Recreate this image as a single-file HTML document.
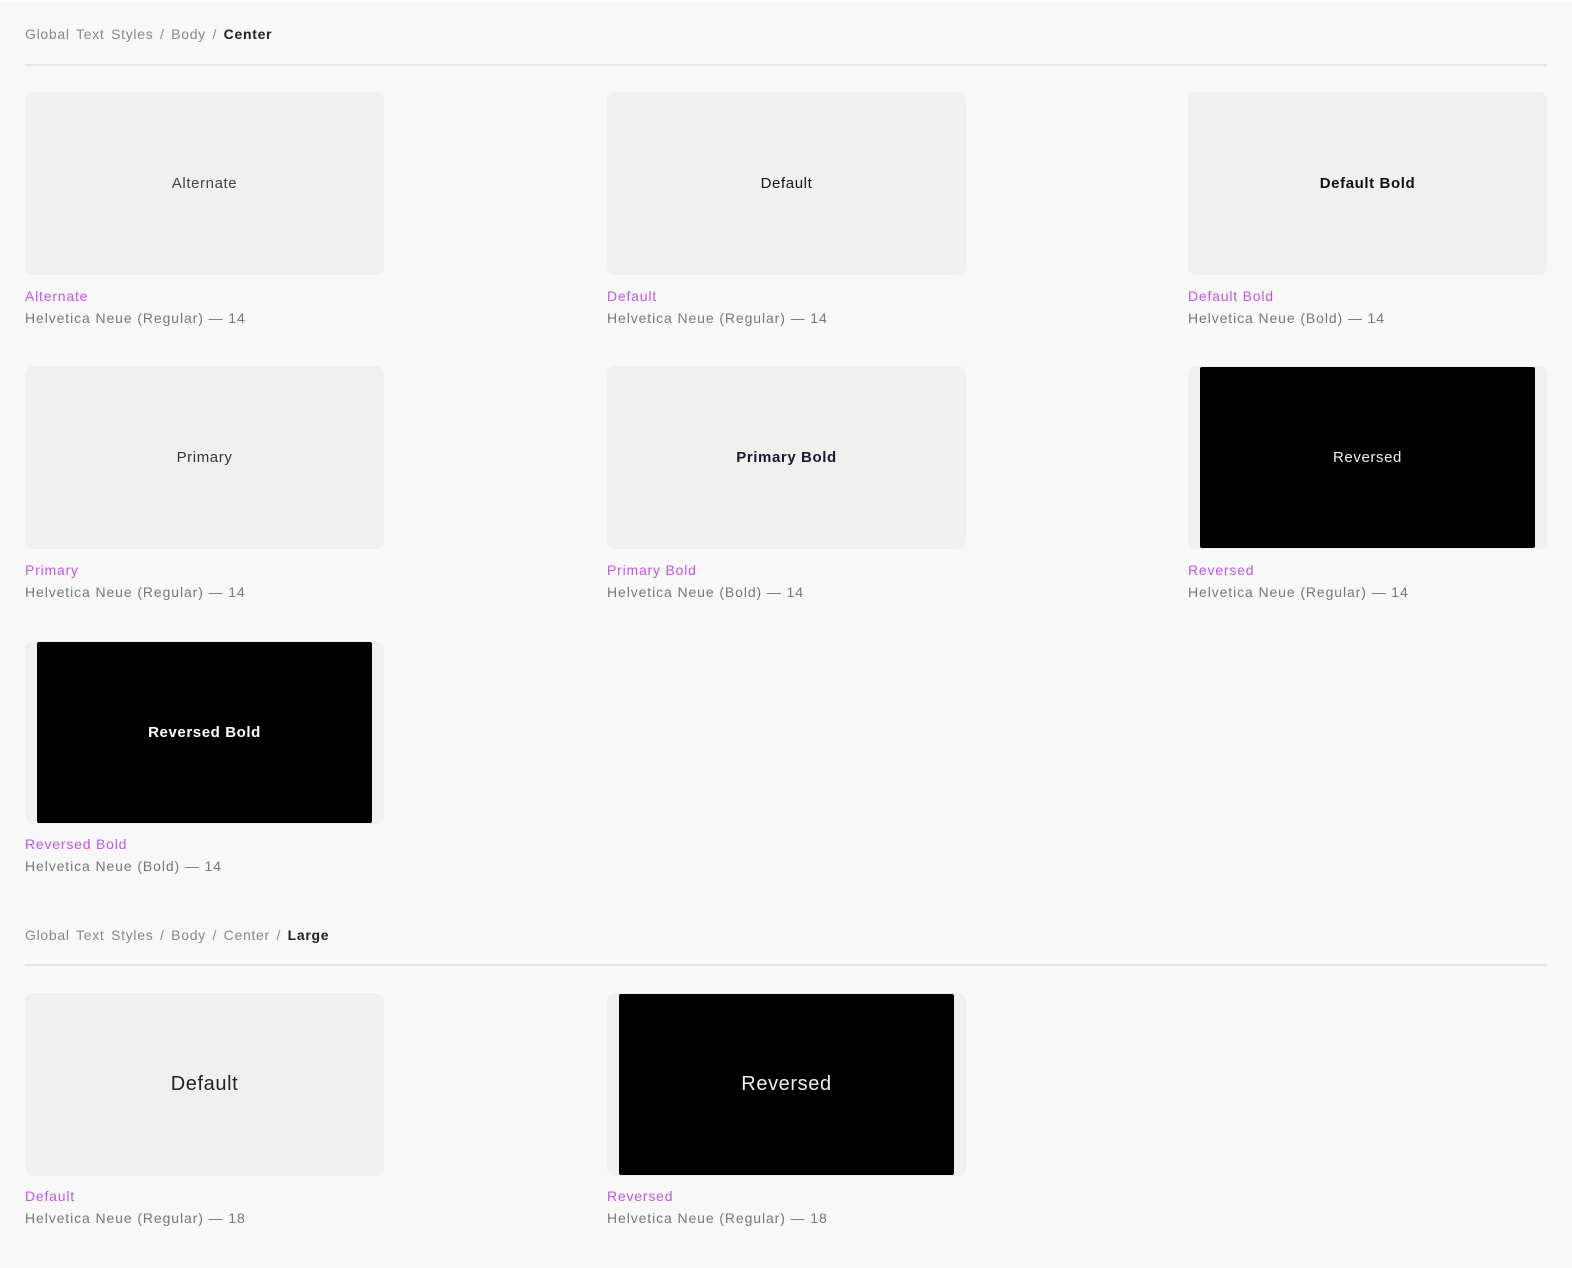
<!DOCTYPE html>
<html><head><meta charset="utf-8"><style>
*{margin:0;padding:0;box-sizing:border-box}
body{width:1572px;height:1268px;background:#f8f8f8;font-family:"Liberation Sans",Arial,sans-serif;position:relative;overflow:hidden}
.top{position:absolute;left:0;top:0;width:1572px;height:3px;background:#fff}
.hd{position:absolute;left:25px;font-size:14px;color:#888;letter-spacing:0.7px;word-spacing:2px}
.hd b{color:#222}
.rule{position:absolute;left:25px;width:1522px;height:2px;background:#e6e6e6}
.card{position:absolute;width:359px;height:183px;background:#f0f0f0;border-radius:8px;display:flex;align-items:center;justify-content:center;font-size:15px;color:#333;letter-spacing:0.6px}
.card .blk{position:absolute;left:12px;right:12px;top:1px;bottom:1px;background:#000;border-radius:2px;display:flex;align-items:center;justify-content:center;color:#eee}
.nm{position:absolute;font-size:14px;color:#c158e0;letter-spacing:0.8px}
.sp{position:absolute;font-size:14px;color:#777;letter-spacing:0.9px}
</style></head><body>
<div class="top"></div>
<div class="hd" style="top:26px">Global Text Styles / Body / <b>Center</b></div>
<div class="rule" style="top:64px"></div>

<div class="card" style="left:25px;top:92px;color:#444">Alternate</div>
<div class="nm" style="left:25px;top:288px">Alternate</div>
<div class="sp" style="left:25px;top:310px">Helvetica Neue (Regular) — 14</div>

<div class="card" style="left:607px;top:92px;color:#111">Default</div>
<div class="nm" style="left:607px;top:288px">Default</div>
<div class="sp" style="left:607px;top:310px">Helvetica Neue (Regular) — 14</div>

<div class="card" style="left:1188px;top:92px;color:#111;font-weight:bold">Default Bold</div>
<div class="nm" style="left:1188px;top:288px">Default Bold</div>
<div class="sp" style="left:1188px;top:310px">Helvetica Neue (Bold) — 14</div>

<div class="card" style="left:25px;top:366px;color:#333">Primary</div>
<div class="nm" style="left:25px;top:562px">Primary</div>
<div class="sp" style="left:25px;top:584px">Helvetica Neue (Regular) — 14</div>

<div class="card" style="left:607px;top:366px;color:#1a1a2e;font-weight:bold">Primary Bold</div>
<div class="nm" style="left:607px;top:562px">Primary Bold</div>
<div class="sp" style="left:607px;top:584px">Helvetica Neue (Bold) — 14</div>

<div class="card" style="left:1188px;top:366px"><div class="blk">Reversed</div></div>
<div class="nm" style="left:1188px;top:562px">Reversed</div>
<div class="sp" style="left:1188px;top:584px">Helvetica Neue (Regular) — 14</div>

<div class="card" style="left:25px;top:641px"><div class="blk" style="font-weight:bold;color:#fff">Reversed Bold</div></div>
<div class="nm" style="left:25px;top:836px">Reversed Bold</div>
<div class="sp" style="left:25px;top:858px">Helvetica Neue (Bold) — 14</div>

<div class="hd" style="top:927px">Global Text Styles / Body / Center / <b>Large</b></div>
<div class="rule" style="top:964px"></div>

<div class="card" style="left:25px;top:993px;font-size:20px;color:#222">Default</div>
<div class="nm" style="left:25px;top:1188px">Default</div>
<div class="sp" style="left:25px;top:1210px">Helvetica Neue (Regular) — 18</div>

<div class="card" style="left:607px;top:993px;font-size:20px"><div class="blk">Reversed</div></div>
<div class="nm" style="left:607px;top:1188px">Reversed</div>
<div class="sp" style="left:607px;top:1210px">Helvetica Neue (Regular) — 18</div>
</body></html>
